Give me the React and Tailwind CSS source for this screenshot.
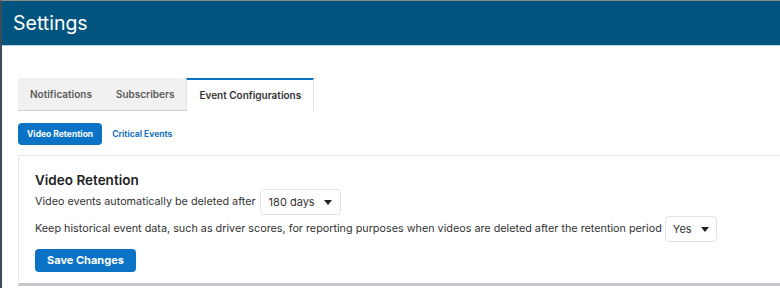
import { useState } from 'react';

const Caret = () => (
  <svg width="8" height="5" viewBox="0 0 8 5" className="ml-[9px]">
    <path d="M0 0h8L4 5z" fill="#222" />
  </svg>
);

const SelectBox = ({ value, className = '' }) => (
  <div className={`flex items-center rounded border border-[#e3e3e3] bg-white text-[11px] text-[#333] ${className}`}>
    <span>{value}</span>
    <Caret />
  </div>
);

export default function App() {
  const [tab, setTab] = useState('events');
  const [sub, setSub] = useState('video');

  const tabs = [
    { id: 'notifications', label: 'Notifications' },
    { id: 'subscribers', label: 'Subscribers' },
    { id: 'events', label: 'Event Configurations' },
  ];

  return (
    <div
      className="h-[288px] w-[780px] overflow-hidden border-t border-l-2 border-t-[#8a8a8a] border-l-[#3b4b57] bg-white"
      style={{ fontFamily: 'Inter, "Noto Sans", sans-serif' }}
    >
      <header className="flex h-[45px] items-center border-b border-[#b9d3e2] bg-[#00547e] pl-[11px] pt-[2px]">
        <h1 className="text-[19.5px] font-normal text-white">Settings</h1>
      </header>

      <div className="w-[800px] pl-4 pt-8">
        <div className="flex h-[33px] w-fit items-stretch">
          {tabs.map((t) => {
            const active = tab === t.id;
            return (
              <button
                key={t.id}
                onClick={() => setTab(t.id)}
                className={
                  active
                    ? 'border-x border-t-2 border-x-[#e2e2e2] border-t-[#0b73c6] bg-white px-3 text-[10px] font-semibold text-[#333]'
                    : 'border-b border-[#cfcfcf] bg-[#f1f1f1] px-3 text-[10px] font-semibold text-[#5b5b5b]'
                }
              >
                {t.label}
              </button>
            );
          })}
        </div>

        <div className="mt-3 flex items-center gap-[1px]">
          <button
            onClick={() => setSub('video')}
            className={`h-[22px] rounded-sm px-[9px] text-[8.5px] font-bold ${sub === 'video' ? 'bg-[#0b73c6] text-white' : 'text-[#1a73c0]'}`}
          >
            Video Retention
          </button>
          <button
            onClick={() => setSub('critical')}
            className={`h-[22px] rounded-sm px-[9px] text-[8.5px] font-bold ${sub === 'critical' ? 'bg-[#0b73c6] text-white' : 'text-[#1a73c0]'}`}
          >
            Critical Events
          </button>
        </div>

        <div className="mt-[10px] h-[131px] border border-b-[3px] border-[#e6e6e6] border-b-[#c3c8ce] bg-white pl-4 pt-[15px]">
          <h2 className="text-[13.5px] font-semibold leading-[18px] text-[#222]">Video Retention</h2>
          <div className="flex items-center text-[10.8px] text-[#333]">
            <span>Video events automatically be deleted after</span>
            <SelectBox value="180 days" className="ml-[4px] h-[26px] px-[8px]" />
          </div>
          <div className="mt-[1px] flex items-center text-[10.8px] text-[#333]">
            <span>Keep historical event data, such as driver scores, for reporting purposes when videos are deleted after the retention period</span>
            <SelectBox value="Yes" className="ml-[3px] h-[26px] px-[7px]" />
          </div>
          <button className="mt-[7px] h-[23px] rounded-sm bg-[#0b73c6] px-3 text-[11px] font-bold text-white">
            Save Changes
          </button>
        </div>
      </div>
    </div>
  );
}
